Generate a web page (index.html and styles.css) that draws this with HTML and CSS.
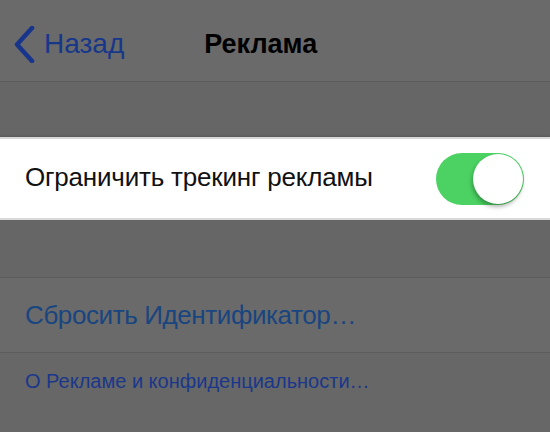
FILE: index.html
```html
<!DOCTYPE html>
<html lang="ru">
<head>
	<meta charset="UTF-8">
	<title>Реклама</title>
	<link rel="stylesheet" href="styles.css">
</head>
<body>
<div class="screen">
	<div class="navbar">
		<div class="back">
			<svg class="chevron" width="22" height="37" viewBox="0 0 22 37">
				<path d="M19 2 L4 18.5 L19 35" fill="none" stroke="#17358c" stroke-width="4.5" stroke-linecap="round" stroke-linejoin="round"/>
			</svg>
			<span>Назад</span>
		</div>
		<div class="title">Реклама</div>
	</div>

	<div class="gap"></div>

	<div class="row row-hl">
		<span class="label">Ограничить трекинг рекламы</span>
		<div class="switch"><div class="knob"></div></div>
	</div>

	<div class="gap gap2"></div>

	<div class="row row-link">
		<span class="link">Сбросить Идентификатор…</span>
	</div>

	<div class="footer">
		<span class="small-link">О Рекламе и конфиденциальности…</span>
	</div>
</div>
</body>
</html>
```

FILE: styles.css
```css
* {
	margin: 0;
	padding: 0;
	box-sizing: border-box;
}

body {
	width: 550px;
	height: 432px;
	overflow: hidden;
	background-color: #676767;
	font-family: "Liberation Sans", Arial, sans-serif;
}

.screen {
	width: 550px;
}

.navbar {
	height: 82px;
	background-color: #6a6a6a;
	border-bottom: 1px solid #5a5a5a;
	display: flex;
	align-items: center;
	padding-top: 7px;
}
.back {
	display: flex;
	align-items: center;
	padding-left: 13px;
	color: #17378a;
	font-size: 28px;
	gap: 9px;
}
.title {
	margin-left: 80px;
	font-size: 27px;
	font-weight: bold;
	color: #000;
}

.gap {
	height: 55px;
	background-color: #666;
}
.gap2 {
	height: 58px;
	border-bottom: 1px solid #5b5b5b;
}

.row {
	display: flex;
	align-items: center;
	padding-left: 25px;
}
.row-hl {
	height: 83px;
	background-color: #fff;
	border-top: 2px solid #d9d9d9;
	border-bottom: 2px solid #d9d9d9;
	justify-content: space-between;
	padding-right: 26px;
	box-shadow: 0 0 3px rgba(0, 0, 0, 0.25);
}
.label {
	font-size: 26px;
	letter-spacing: -0.2px;
	color: #111;
	margin-top: -2px;
}
.switch {
	width: 88px;
	height: 52px;
	border-radius: 26px;
	background-color: #4bd262;
	display: flex;
	align-items: center;
	justify-content: flex-end;
	padding-right: 1px;
}
.knob {
	width: 50px;
	height: 50px;
	border-radius: 50%;
	background-color: #fff;
	box-shadow: -1px 3px 4px rgba(0, 0, 0, 0.3);
}

.row-link {
	height: 75px;
	background-color: #6a6a6a;
	border-bottom: 1px solid #5b5b5b;
}
.link {
	font-size: 26px;
	letter-spacing: -0.4px;
	color: #194580;
}

.footer {
	padding: 17px 0 0 25px;
}
.small-link {
	font-size: 20px;
	color: #1a378b;
}
```
